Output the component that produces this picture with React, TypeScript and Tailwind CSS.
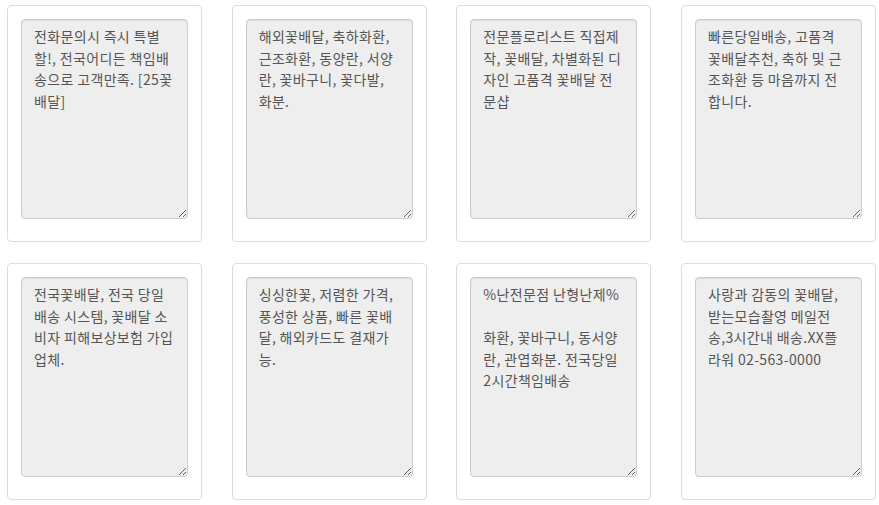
const notes: string[] = [
  "전화문의시 즉시 특별할!, 전국어디든 책임배송으로 고객만족. [25꽃배달]",
  "해외꽃배달, 축하화환, 근조화환, 동양란, 서양란, 꽃바구니, 꽃다발, 화분.",
  "전문플로리스트 직접제작, 꽃배달, 차별화된 디자인 고품격 꽃배달 전문샵",
  "빠른당일배송, 고품격 꽃배달추천, 축하 및 근조화환 등 마음까지 전합니다.",
  "전국꽃배달, 전국 당일 배송 시스템, 꽃배달 소비자 피해보상보험 가입업체.",
  "싱싱한꽃, 저렴한 가격, 풍성한 상품, 빠른 꽃배달, 해외카드도 결재가능.",
  "%난전문점 난형난제%\n\n화환, 꽃바구니, 동서양란, 관엽화분. 전국당일2시간책임배송",
  "사랑과 감동의 꽃배달, 받는모습촬영 메일전송,3시간내 배송.XX플라워 02-563-0000",
];

function NoteCard({ text }: { text: string }) {
  return (
    <div className="rounded-[4px] border border-[#dddddd] bg-white px-[13px] pt-[13px] pb-[22px]">
      <textarea
        readOnly
        defaultValue={text}
        className="block h-[200px] w-[167px] rounded-[4px] border border-[#cccccc] bg-[#eeeeee] px-[12px] py-[6px] text-[14px] leading-[21.5px] tracking-[0.35px] text-[#555555] shadow-[inset_0_1px_1px_rgba(0,0,0,0.075)] outline-none"
        style={{ fontFamily: '"Noto Sans CJK KR", "Noto Sans", sans-serif' }}
      />
    </div>
  );
}

export default function App() {
  return (
    <div className="min-h-[505px] w-[879px] bg-white pl-[7px] pt-[5px]">
      <div className="grid grid-cols-[repeat(4,195px)] gap-x-[29.67px] gap-y-[21px]">
        {notes.map((n, i) => (
          <NoteCard key={i} text={n} />
        ))}
      </div>
    </div>
  );
}
